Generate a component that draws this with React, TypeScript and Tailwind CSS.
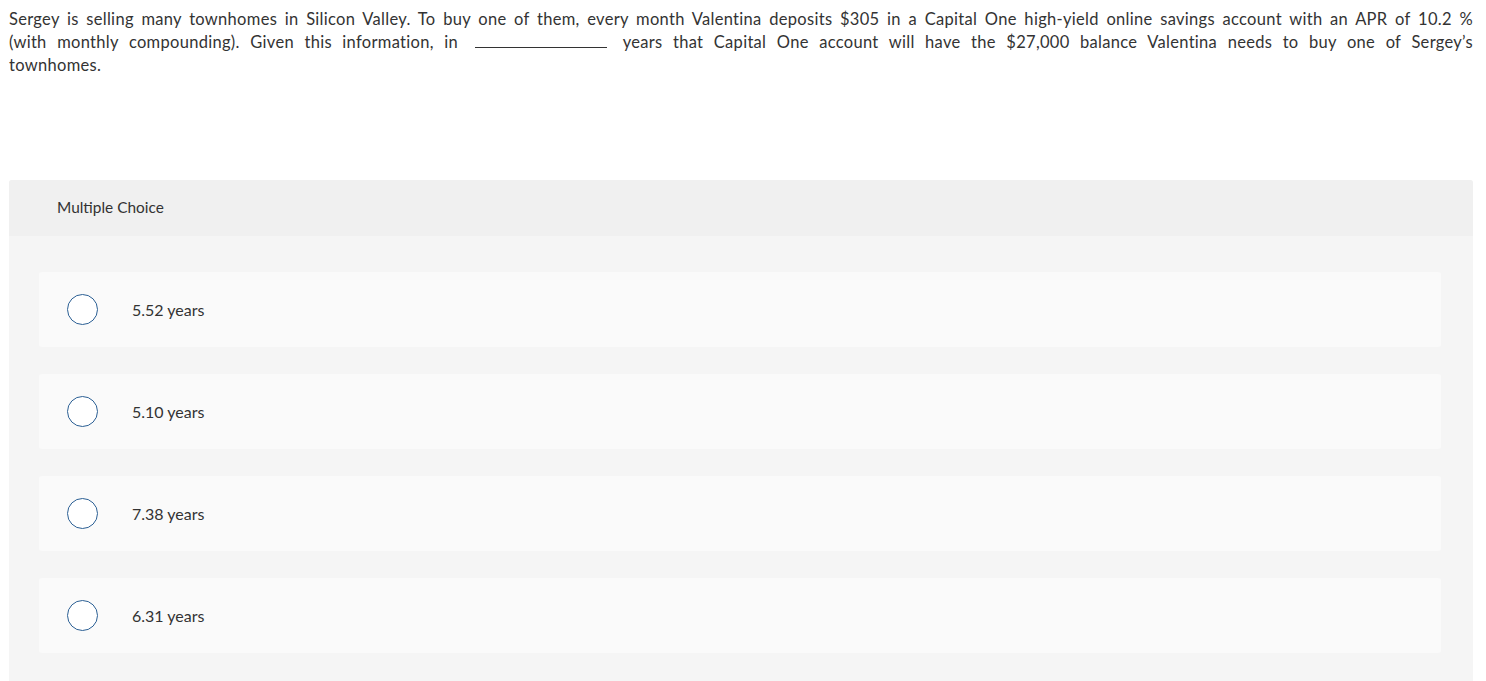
import React from "react";

const OPTIONS = ["5.52 years", "5.10 years", "7.38 years", "6.31 years"];

export default function App() {
    return (
        <div className="min-h-screen w-full bg-white text-[#333333]" style={{ fontFamily: "Lato, 'Liberation Sans', sans-serif" }}>
            <div className="pl-[9px] pr-[13px] pt-[8px] text-[16.5px] leading-[23px] tracking-[0.3px]">
                {/* each line justified so the breaks fall where the picture has them */}
                <p className="text-justify [text-align-last:justify]">
                    Sergey is selling many townhomes in Silicon Valley. To buy one of them, every month Valentina deposits $305 in a
                    Capital One high-yield online savings account with an APR of 10.2 %
                </p>
                <p className="text-justify [text-align-last:justify]">
                    (with monthly compounding). Given this information, in{" "}
                    <span className="inline-block w-[132px] border-b border-[#333333] align-baseline mx-[6px]" />{" "}
                    years that Capital One account will have the $27,000 balance Valentina needs to buy one of Sergey’s
                </p>
                <p>townhomes.</p>
            </div>

            {/* multiple choice block */}
            <div className="ml-[9px] mr-[13px] mt-[103px] rounded-t-[3px] bg-[#f5f5f5]">
                <div className="flex h-[56px] items-center rounded-t-[3px] bg-[#f0f0f0] pl-[48px] text-[15.4px]">
                    Multiple Choice
                </div>
                <div className="flex flex-col gap-[27px] pl-[30px] pr-[32px] pt-[36px] pb-[30px]">
                    {OPTIONS.map((o) => (
                        <div key={o} className="flex h-[75px] items-center rounded-[3px] bg-[#fafafa]">
                            <span className="ml-[28px] h-[31px] w-[31px] shrink-0 rounded-full border-[1.5px] border-[#2b5f94] bg-white" />
                            <span className="ml-[34px] text-[16px]">{o}</span>
                        </div>
                    ))}
                </div>
            </div>
        </div>
    );
}
